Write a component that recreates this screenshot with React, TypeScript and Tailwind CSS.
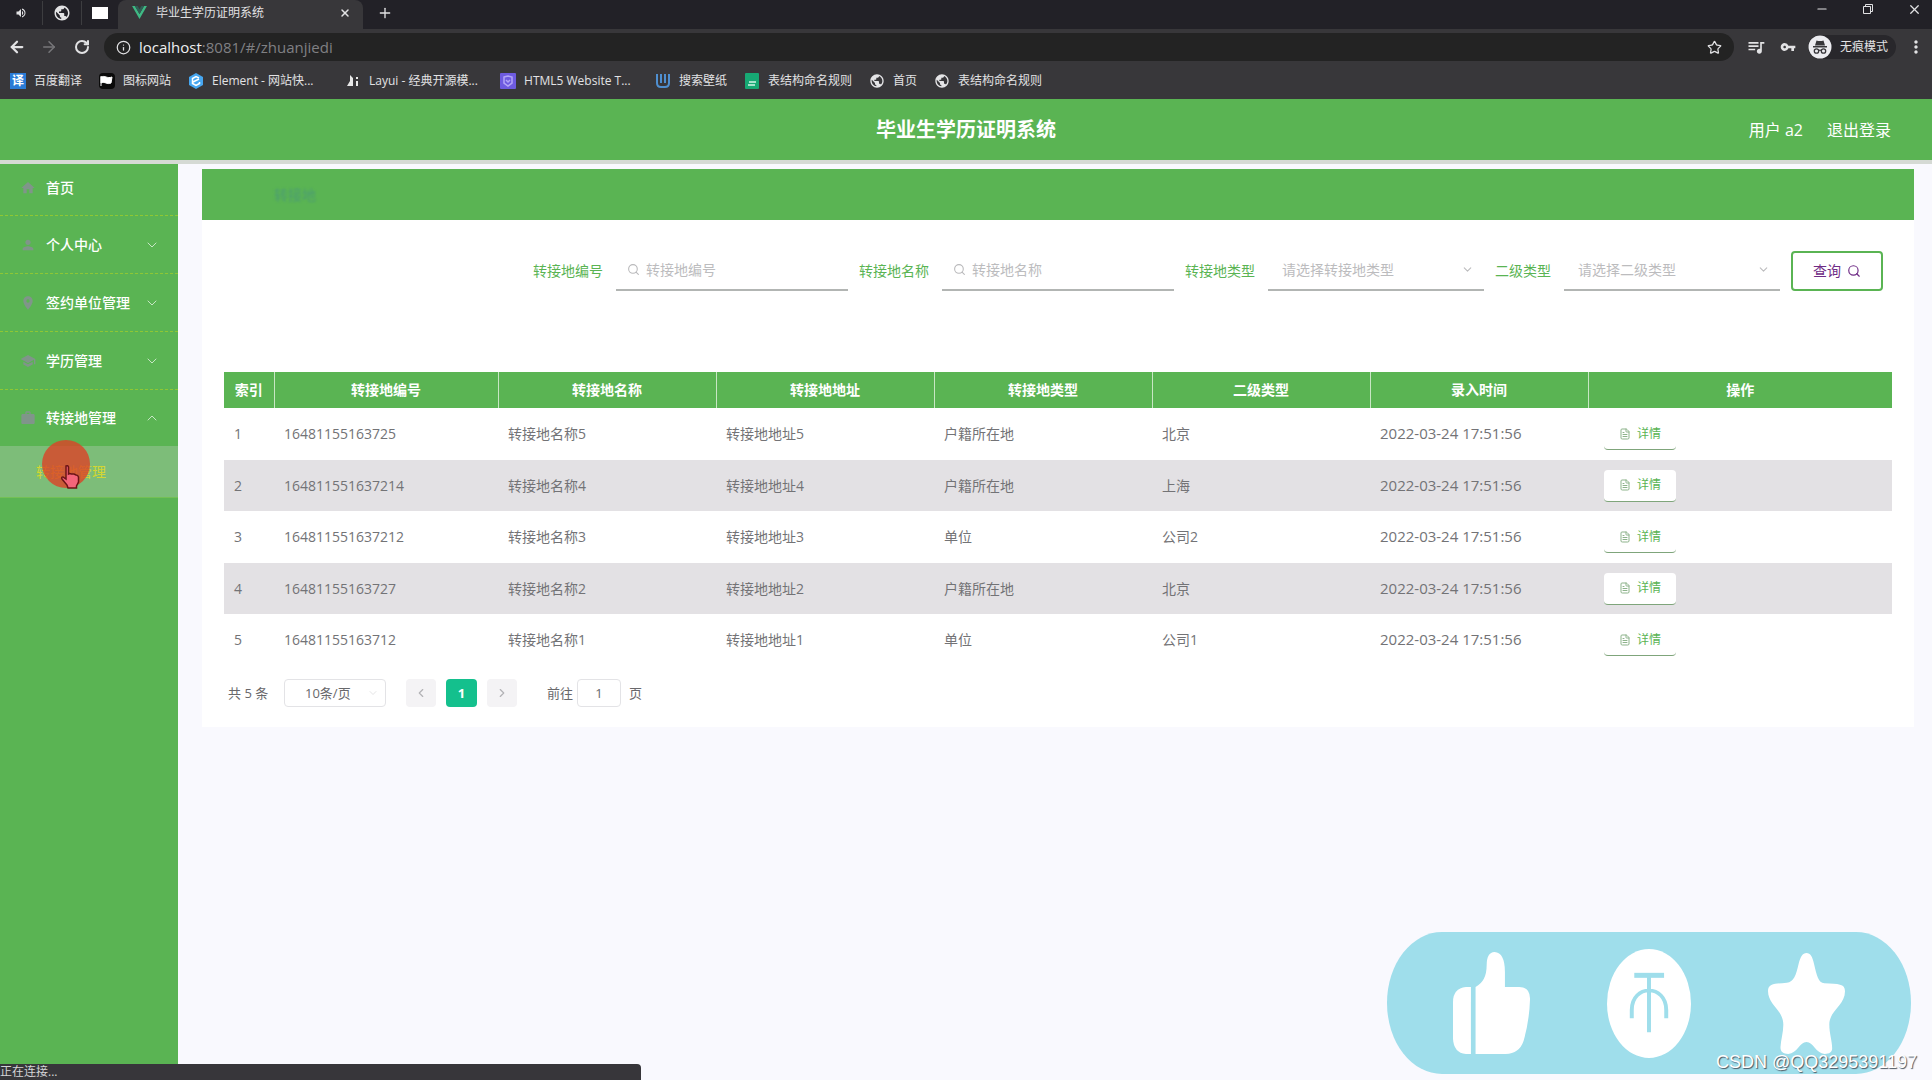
import type { ReactNode } from "react"
import {
    ArrowLeft,
    ArrowRight,
    ChevronDown,
    ChevronLeft,
    ChevronRight,
    ChevronUp,
    FileText,
    Info,
    Minus,
    Plus,
    RotateCw,
    Search,
    Star,
    X,
} from "lucide-react"
import {
    MdHome,
    MdPerson,
    MdPlace,
    MdPublic,
    MdQueueMusic,
    MdSchool,
    MdVolumeUp,
    MdVpnKey,
    MdWork,
    MdMoreVert,
} from "react-icons/md"

interface Bookmark {
    label: string
    icon: ReactNode
    width?: string
}

const globe = <MdPublic className="size-4 text-[#e4e4e6]" />

const bookmarks: Bookmark[] = [
    {
        label: "百度翻译",
        icon: <span className="size-4 bg-[#2a7bd6] text-center text-xs leading-4 font-bold text-white">译</span>,
    },
    {
        label: "图标网站",
        icon: (
            <svg viewBox="0 0 16 16" className="size-4">
                <rect width="16" height="16" rx="4" fill="#0a0a0a" />
                <path d="M2 3v10M2 4c4-2 6 2 11 0l-1 6c-4 2-6-2-10 0z" fill="#fff" stroke="#fff" />
            </svg>
        ),
    },
    {
        label: "Element - 网站快...",
        width: "w-[116px]",
        icon: (
            <svg viewBox="0 0 16 16" className="size-4">
                <path d="M8 0l7 4v8l-7 4-7-4V4z" fill="#46a6f0" />
                <path d="M11 5L8 3.500 4.500 5.500v5L8 12.500l3.500-2v-1.500M5 9l6-3" fill="none" stroke="#fff" strokeWidth="1.500" />
            </svg>
        ),
    },
    {
        label: "Layui - 经典开源模...",
        width: "w-[114px]",
        icon: (
            <svg viewBox="0 0 16 16" className="size-4">
                <path d="M5 2v6l-3 5h6V5zM11 8h2v5h-2zM11 4h2v2h-2z" fill="#e8e8e8" />
            </svg>
        ),
    },
    {
        label: "HTML5 Website T...",
        width: "w-[114px]",
        icon: (
            <svg viewBox="0 0 16 16" className="size-4">
                <rect width="16" height="16" rx="1" fill="#6e5be0" />
                <path d="M4 4l4-1 4 1v6l-4 3-4-3zM6 7l2 2 2-2" fill="none" stroke="#b3a6f7" strokeWidth="1.500" />
            </svg>
        ),
    },
    {
        label: "搜索壁纸",
        icon: (
            <svg viewBox="0 0 16 16" className="size-4">
                <path d="M2 1v9q0 4 4 4h4q4 0 4-4V1M6 1v9M10 1v9" fill="none" stroke="#4f8fd0" strokeWidth="2" />
            </svg>
        ),
    },
    {
        label: "表结构命名规则",
        icon: (
            <svg viewBox="0 0 16 16" className="size-4">
                <rect x="1" width="14" height="16" rx="1" fill="#17a974" />
                <path d="M5 9h7M4 12h7" stroke="#d5f5e7" strokeWidth="1.500" />
            </svg>
        ),
    },
    { label: "首页", icon: globe },
    { label: "表结构命名规则", icon: globe },
]

const menu = [
    { label: "首页", Icon: MdHome, arrow: "", height: "h-[52px] pb-1" },
    { label: "个人中心", Icon: MdPerson, arrow: "down", height: "h-[58px]" },
    { label: "签约单位管理", Icon: MdPlace, arrow: "down", height: "h-[58px]" },
    { label: "学历管理", Icon: MdSchool, arrow: "down", height: "h-[58px]" },
    { label: "转接地管理", Icon: MdWork, arrow: "up", height: "h-14" },
]

const columns = [
    { title: "索引", width: "w-[50px]" },
    { title: "转接地编号", width: "w-[224px]" },
    { title: "转接地名称", width: "w-[218px]" },
    { title: "转接地地址", width: "w-[218px]" },
    { title: "转接地类型", width: "w-[218px]" },
    { title: "二级类型", width: "w-[218px]" },
    { title: "录入时间", width: "w-[218px]" },
    { title: "操作", width: "" },
]

const rows = [
    { no: "16481155163725", name: "转接地名称5", address: "转接地地址5", type: "户籍所在地", sub: "北京" },
    { no: "164811551637214", name: "转接地名称4", address: "转接地地址4", type: "户籍所在地", sub: "上海" },
    { no: "164811551637212", name: "转接地名称3", address: "转接地地址3", type: "单位", sub: "公司2" },
    { no: "16481155163727", name: "转接地名称2", address: "转接地地址2", type: "户籍所在地", sub: "北京" },
    { no: "16481155163712", name: "转接地名称1", address: "转接地地址1", type: "单位", sub: "公司1" },
]

function BrowserChrome() {
    return (
        <div className="bg-[#38373a] text-xs text-[#e2e2e4]">
            <div className="flex h-[29px] items-stretch bg-[#222127]">
                <div className="flex w-[118px] items-center pb-1">
                    <span className="flex h-6 w-[43px] items-center justify-center border-r border-[#3d3d40]">
                        <MdVolumeUp className="size-3" />
                    </span>
                    <span className="flex h-6 w-[39px] items-center justify-center border-r border-[#3d3d40]">
                        <MdPublic className="size-[18px]" />
                    </span>
                    <span className="ml-[10px] h-3 w-4 bg-white" />
                </div>
                <div className="flex w-[245px] items-center rounded-t-lg bg-[#38373a] pr-3 pb-1 pl-[14px]">
                    <svg viewBox="0 0 16 14" className="h-[13px] w-[15px]">
                        <path d="M0 0h3l5 8.500L13 0h3L8 14z" fill="#3fb984" />
                        <path d="M3 0h3l2 3.500L10 0h3L8 8.500z" fill="#2f5f55" />
                    </svg>
                    <span className="ml-[9px] flex-1">毕业生学历证明系统</span>
                    <button aria-label="关闭标签页">
                        <X className="size-3" strokeWidth={3} />
                    </button>
                </div>
                <button aria-label="新标签页" className="px-[14px] pb-1">
                    <Plus className="size-4" />
                </button>
                <div className="ml-auto flex items-start gap-8 pt-[2px] pr-[10px]">
                    <button aria-label="最小化">
                        <Minus className="size-[14px]" />
                    </button>
                    <button aria-label="还原">
                        <svg viewBox="0 0 14 14" className="size-[14px]" fill="none" stroke="currentColor">
                            <path d="M2.500 4.500h7v7h-7zM4.500 4.500v-2h7v7h-2" />
                        </svg>
                    </button>
                    <button aria-label="关闭">
                        <X className="size-[15px]" />
                    </button>
                </div>
            </div>

            <div className="flex h-9 items-center pl-2">
                <button aria-label="后退" className="w-5">
                    <ArrowLeft className="size-[18px]" strokeWidth={3} />
                </button>
                <button aria-label="前进" className="ml-3 w-5 text-[#77777a]">
                    <ArrowRight className="size-[18px]" strokeWidth={2} />
                </button>
                <button aria-label="重新加载" className="ml-[14px] w-5">
                    <RotateCw className="size-4" strokeWidth={3} />
                </button>
                <div className="ml-[10px] flex h-7 flex-1 items-center rounded-full bg-[#232323] px-3">
                    <Info className="size-[15px] shrink-0" strokeWidth={2} />
                    <span className="ml-2 flex-1 text-[15px] leading-5 text-[#808083]">
                        <span className="text-[#efeff0]">localhost</span>:8081/#/zhuanjiedi
                    </span>
                    <Star className="size-[15px]" />
                </div>
                <MdQueueMusic className="ml-3 size-5" />
                <MdVpnKey className="ml-[14px] size-4" />
                <div className="ml-3 flex h-6 items-center rounded-full bg-[#28272b] pr-2">
                    <svg viewBox="0 0 24 24" className="size-6">
                        <circle cx="12" cy="12" r="11.500" fill="#ececf0" />
                        <path d="M8.500 5.500q3.500 1 7 0l1.500 5H7zM5 11h14v1.500H5z" fill="#37363a" />
                        <g fill="none" stroke="#37363a" strokeWidth="1.300">
                            <circle cx="8.500" cy="16" r="2.200" />
                            <circle cx="15.500" cy="16" r="2.200" />
                            <path d="M10.700 15.500q1.300-.6 2.600 0" />
                        </g>
                    </svg>
                    <span className="ml-2">无痕模式</span>
                </div>
                <button aria-label="更多" className="mr-[6px] ml-[10px]">
                    <MdMoreVert className="size-5" />
                </button>
            </div>

            <nav className="flex h-[34px] items-center gap-[17px] pb-[2px] pl-[10px]">
                {bookmarks.map((bookmark, i) => (
                    <a key={i} href="#" className="flex items-center gap-2 whitespace-nowrap">
                        {bookmark.icon}
                        <span className={bookmark.width}>{bookmark.label}</span>
                    </a>
                ))}
            </nav>
        </div>
    )
}

function Pointer() {
    return (
        <div className="pointer-events-none absolute top-[-6px] left-[42px] size-12 rounded-full bg-[#dc4227]/80">
            <svg viewBox="0 0 20 26" className="absolute top-6 left-[18px] h-[26px] w-5">
                <path
                    d="M6 2q2-1 2.500 1v7l1-.5 2 .5 2.500 0 2 1q2 0 2.500 2v5l-2 4v2H8l-1-3-5-6q-1-2 1-2l3 2V3z"
                    fill="#f4657a"
                    stroke="#6b1416"
                    strokeWidth="1.500"
                />
            </svg>
        </div>
    )
}

function Sidebar() {
    return (
        <aside className="w-[178px] shrink-0 bg-[#5ab453] text-sm text-white">
            {menu.map(({ label, Icon, arrow, height }) => (
                <a
                    key={label}
                    href="#"
                    className={`flex items-center border-dashed border-[#8fc734] pr-[18px] pl-5 font-medium ${height} ${
                        arrow === "up" ? "" : "border-b"
                    }`}
                >
                    <Icon className="size-4 text-[#80958a]" />
                    <span className="ml-[10px] flex-1">{label}</span>
                    {arrow === "down" && <ChevronDown className="size-4" strokeWidth={1} />}
                    {arrow === "up" && <ChevronUp className="size-4" strokeWidth={1} />}
                </a>
            ))}
            <div className="relative">
                <a href="#" className="flex h-[52px] items-center border-b border-[#74c055] bg-[#7dbd79] pl-9 text-[#d3d632]">
                    转接地管理
                </a>
                <Pointer />
            </div>
        </aside>
    )
}

function TextFilter({ id, label }: { id: string; label: string }) {
    return (
        <div className="flex items-center gap-[13px]">
            <label htmlFor={id} className="text-[#5ab453]">
                {label}
            </label>
            <div className="flex h-[41px] w-[232px] items-center gap-[6px] border-b-2 border-[#b2b5b3] px-[11px]">
                <Search className="size-[13px] shrink-0 text-[#b9b9bb]" strokeWidth={2} />
                <input id={id} placeholder={label} className="w-full min-w-0 outline-none placeholder:text-[#bcbcbe]" />
            </div>
        </div>
    )
}

function SelectFilter({ id, label, placeholder }: { id: string; label: string; placeholder: string }) {
    return (
        <div className="flex items-center gap-[13px]">
            <label htmlFor={id} className="text-[#5ab453]">
                {label}
            </label>
            <div className="flex h-[41px] w-[216px] items-center border-b-2 border-[#b2b5b3] pr-[10px] pl-[14px]">
                <select id={id} className="flex-1 appearance-none text-[#bcbcbe] outline-none">
                    <option>{placeholder}</option>
                </select>
                <ChevronDown className="size-[13px] text-[#bcbcbe]" strokeWidth={2} />
            </div>
        </div>
    )
}

function DataTable() {
    return (
        <table className="w-full table-fixed border-collapse text-left text-[#737376]">
            <thead>
                <tr className="h-9 bg-[#5ab453] text-white">
                    {columns.map((column) => (
                        <th
                            key={column.title}
                            className={`border-r border-[#c8e6c4] text-center font-bold last:border-r-0 ${column.width}`}
                        >
                            {column.title}
                        </th>
                    ))}
                </tr>
            </thead>
            <tbody>
                {rows.map((row, i) => (
                    <tr key={row.no} className="odd:h-[52px] even:h-[51px] even:bg-[#e3e1e4]">
                        <td className="pl-[10px]">{i + 1}</td>
                        <td className="pl-[10px]">{row.no}</td>
                        <td className="pl-[10px]">{row.name}</td>
                        <td className="pl-[10px]">{row.address}</td>
                        <td className="pl-[10px]">{row.type}</td>
                        <td className="pl-[10px]">{row.sub}</td>
                        <td className="pl-[10px] text-[15px]">2022-03-24 17:51:56</td>
                        <td className="pl-4">
                            <button className="flex h-8 w-[72px] items-center justify-center gap-[6px] rounded-sm border-b border-[#7fa57b] bg-white text-xs text-[#5ab453]">
                                <FileText className="size-3 text-[#8db38b]" strokeWidth={2} />
                                详情
                            </button>
                        </td>
                    </tr>
                ))}
            </tbody>
        </table>
    )
}

function Pagination() {
    return (
        <div className="mt-[13px] flex h-7 items-center text-[13px] text-[#68686b]">
            <span className="ml-1 w-[56px] whitespace-nowrap">共 5 条</span>
            <div className="flex h-7 w-[102px] items-center rounded border border-[#e3e3e6] pr-[6px] pl-5">
                <select aria-label="每页条数" className="flex-1 appearance-none outline-none">
                    <option>10条/页</option>
                </select>
                <ChevronDown className="size-3 text-[#c8c8ca]" strokeWidth={1} />
            </div>
            <button aria-label="上一页" className="ml-5 flex h-7 w-[30px] items-center justify-center rounded-sm bg-[#f4f3f5]">
                <ChevronLeft className="size-[14px] text-[#b2b2b5]" />
            </button>
            <button className="ml-[10px] h-7 w-[31px] rounded-sm bg-[#14c08d] font-bold text-white">1</button>
            <button aria-label="下一页" className="ml-[10px] flex h-7 w-[30px] items-center justify-center rounded-sm bg-[#f4f3f5]">
                <ChevronRight className="size-[14px] text-[#b2b2b5]" />
            </button>
            <label htmlFor="page" className="ml-[30px]">
                前往
            </label>
            <input
                id="page"
                defaultValue="1"
                className="mx-1 h-7 w-[44px] rounded border border-[#e3e3e6] text-center outline-none"
            />
            <span className="ml-1">页</span>
        </div>
    )
}

function LikeBadge() {
    return (
        <div className="absolute right-[21px] bottom-[6px] flex h-[142px] w-[524px] items-center justify-between rounded-[55px/71px] bg-[#9fdeeb] px-[66px]">
            <svg viewBox="231 125 215 306" preserveAspectRatio="none" className="h-[102px] w-[77px]" fill="#fff">
                <path d="M281 230h-14q-36 4-36 45v110q2 42 36 46h14z" />
                <path d="M294 230q31-17 31-65 0-39 22-40 29 2 29 60v45h40q31 0 30 38-2 65-18 124-12 38-50 39h-84z" />
            </svg>
            <svg viewBox="661 114 234 327" preserveAspectRatio="none" className="h-[109px] w-[84px]">
                <ellipse cx="778" cy="277.500" rx="117" ry="163.500" fill="#fff" />
                <g fill="none" stroke="#9fdeeb">
                    <path d="M737 193h83" strokeWidth="15" />
                    <path d="M778 193v171M730 322v-25c0-78 96-78 96 0v25" strokeWidth="11" />
                </g>
            </svg>
            <svg viewBox="1111 128 216 303" preserveAspectRatio="none" className="h-[101px] w-[77px]" fill="#fff">
                <path d="M1219 128c11 0 17 12 21 32 8 36 12 57 29 59 40 2 58 1 58 24 0 43-44 58-44 99 0 28 8 51 8 72 0 12-8 17-21 17-25-2-32-36-51-36s-26 34-51 36c-14 0-22-6-22-20 1-23 8-44 8-68 0-44-43-59-43-101 0-24 23-22 53-25 19-3 25-20 33-57 5-20 11-32 22-32z" />
            </svg>
            <span className="absolute right-[-6px] bottom-0 font-[family-name:'Liberation_Sans',sans-serif] text-lg leading-6 whitespace-nowrap text-white [text-shadow:1px_1px_1px_#4b5560]">
                CSDN @QQ3295391197
            </span>
        </div>
    )
}

export default function App() {
    return (
        <div className="relative flex min-h-screen flex-col overflow-hidden bg-[#f9f9fe] font-[family-name:'Open_Sans','Noto_Sans_CJK_SC',sans-serif]">
            <BrowserChrome />
            <header className="flex h-[65px] items-center border-b-4 border-[#d5dad4] bg-[#5ab453] px-[41px] text-white">
                <div className="flex-1" />
                <h1 className="text-xl font-bold">毕业生学历证明系统</h1>
                <div className="flex flex-1 items-center justify-end gap-6">
                    <span>用户 a2</span>
                    <a href="#">退出登录</a>
                </div>
            </header>
            <div className="flex flex-1">
                <Sidebar />
                <main className="flex-1 pt-[5px] pr-[18px] pl-6 text-sm">
                    <div className="flex h-[51px] items-center bg-[#5ab453] px-[72px]">
                        <span className="text-[#4c9d72] blur-[1px]">转接地</span>
                    </div>
                    <section className="bg-white px-[22px] pt-[30px] pb-5">
                        <form className="mb-[81px] flex items-center justify-end gap-[11px] pr-[9px]">
                            <TextFilter id="code" label="转接地编号" />
                            <TextFilter id="name" label="转接地名称" />
                            <SelectFilter id="type" label="转接地类型" placeholder="请选择转接地类型" />
                            <SelectFilter id="subtype" label="二级类型" placeholder="请选择二级类型" />
                            <button
                                type="button"
                                className="flex h-10 w-[92px] items-center justify-center gap-[6px] rounded border-2 border-[#5ab453] text-[#6f2c86]"
                            >
                                查询
                                <Search className="size-[14px]" strokeWidth={2} />
                            </button>
                        </form>
                        <DataTable />
                        <Pagination />
                    </section>
                </main>
            </div>
            <LikeBadge />
            <div className="absolute bottom-0 left-0 h-4 w-[641px] rounded-tr bg-[#37363a] text-xs leading-4 text-[#d4d4d7]">
                正在连接...
            </div>
        </div>
    )
}
